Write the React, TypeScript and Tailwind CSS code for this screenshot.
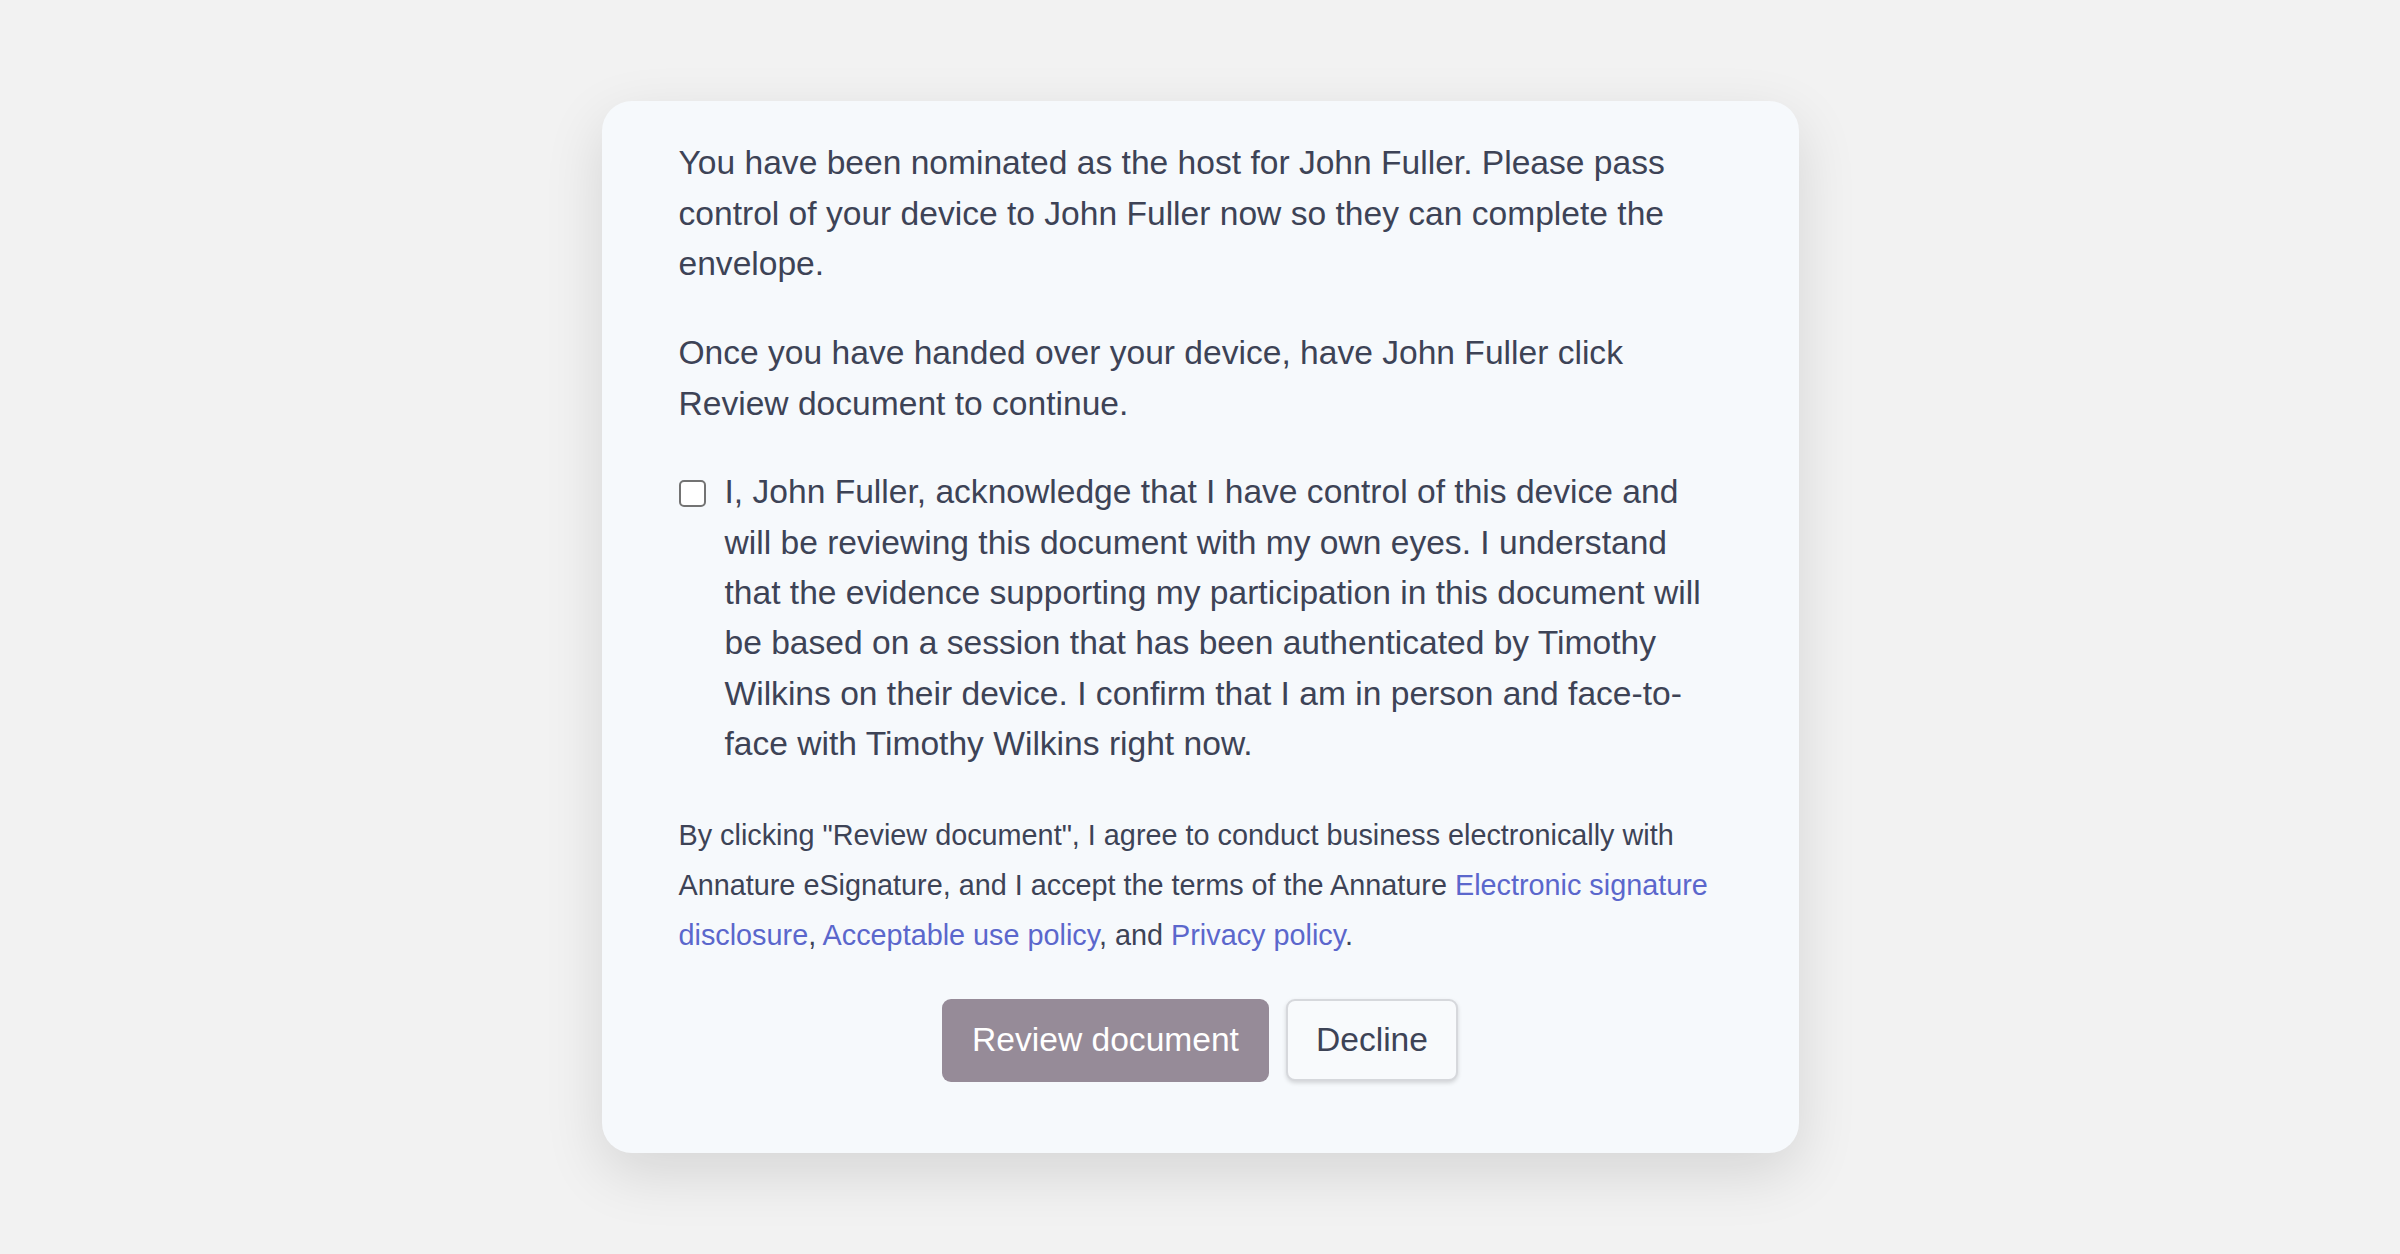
export default function App() {
  return (
    <div
      className="min-h-screen w-full flex items-center justify-center bg-[#f2f2f2]"
      style={{ fontFamily: '"Liberation Sans", Arial, sans-serif' }}
    >
      <div className="w-[1197px] rounded-[30px] bg-[#f6f9fc] px-[77px] pt-[37px] pb-[71px] shadow-[0_20px_60px_rgba(0,0,0,0.12)] text-[#3d4356]">
        <div className="flex flex-col gap-[38px]">
          <p className="text-[33.6px] leading-[50.4px]">
            You have been nominated as the host for John Fuller. Please pass control of your device to John Fuller now so
            they can complete the envelope.
          </p>
          <p className="mt-[1px] text-[33.6px] leading-[50.4px]">
            Once you have handed over your device, have John Fuller click Review document to continue.
          </p>
          <label className="flex items-start gap-[19px] text-[33.6px] leading-[50.4px]">
            <span className="mt-[13px] h-[27px] w-[27px] shrink-0 rounded-[5px] border-2 border-[#737373] bg-white" />
            <span>
              I, John Fuller, acknowledge that I have control of this device and will be reviewing this document with my
              own eyes. I understand that the evidence supporting my participation in this document will be based on a
              session that has been authenticated by Timothy Wilkins on their device. I confirm that I am in person and
              face-to-face with Timothy Wilkins right now.
            </span>
          </label>
          <p className="mt-[2px] text-[28.8px] leading-[50.4px]">
            By clicking "Review document", I agree to conduct business electronically with Annature eSignature, and I
            accept the terms of the Annature <a className="text-[#5b67cc]">Electronic signature disclosure</a>,{' '}
            <a className="text-[#5b67cc]">Acceptable use policy</a>, and <a className="text-[#5b67cc]">Privacy policy</a>.
          </p>
          <div className="flex justify-center gap-[17px]">
            <button className="h-[83px] rounded-[9px] bg-[#968b98] px-[30px] text-[33.6px] leading-[50.4px] text-white">
              Review document
            </button>
            <button className="h-[82px] rounded-[9px] border-2 border-[#d6d8dc] bg-[#f8fafc] px-[28px] text-[33.6px] leading-[50.4px] text-[#3d4356] shadow-[0_2px_4px_rgba(0,0,0,0.15)]">
              Decline
            </button>
          </div>
        </div>
      </div>
    </div>
  )
}
